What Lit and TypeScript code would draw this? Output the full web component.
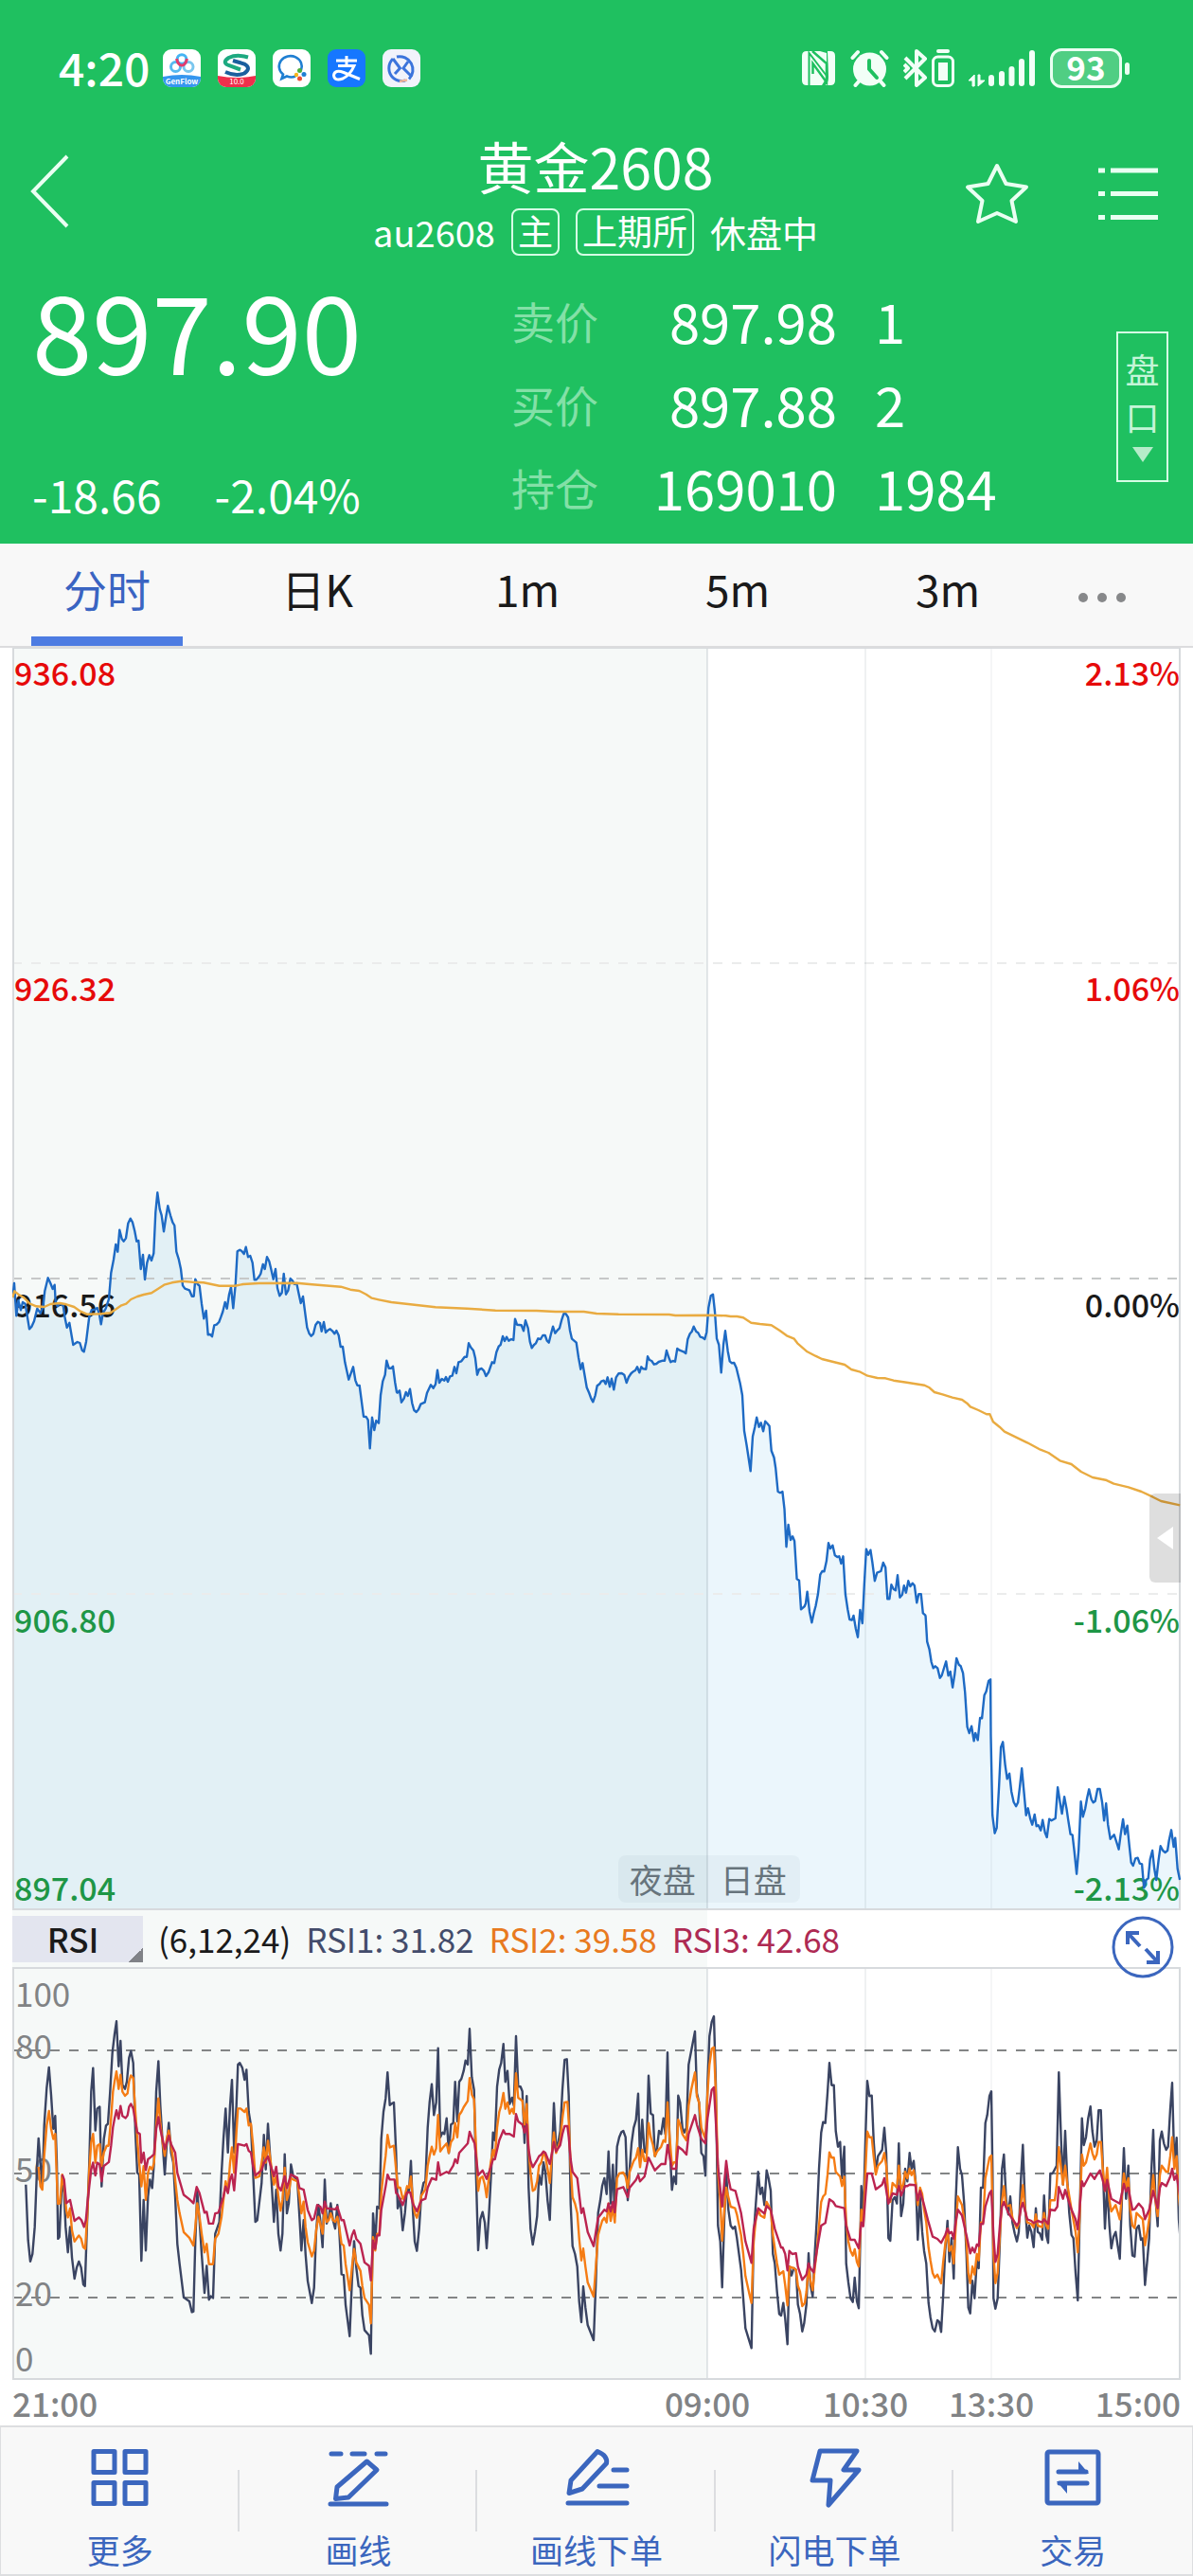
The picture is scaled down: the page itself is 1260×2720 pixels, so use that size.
import { LitElement, html, svg, css } from "lit";
import { customElement, state } from "lit/decorators.js";

/** A stretch of samples: plot offset, sampling density and the "x,y" pairs. */
interface Run {
  at: [number, number];
  density: [number, number];
  samples: string;
}

const toPoints = (runs: Run[]): string =>
  runs
    .map(({ at, density, samples }) =>
      samples
        .trim()
        .split(/\s+/)
        .map((pair) => {
          const [x, y] = pair.split(",").map(Number);
          return `${(at[0] + x / density[0]).toFixed(1)},${(at[1] + y / density[1]).toFixed(1)}`;
        })
        .join(" ")
    )
    .join(" ");

/* ---- price plot: 1234 x 1333 units ---- */

const PRICE = toPoints([
  {
    at: [-13, 536],
    density: [3, 3],
    samples: `40,450 45,405 52,508 58,460 66,490 72,465 80,470 93,550 100,543 108,525 118,485 128,500 136,480 142,430 152,388 160,405 167,423 173,410 176,465 182,478 188,470 200,475 205,510 212,545 220,530 232,600 245,591 253,594 260,617 266,622 273,590 283,510 290,490 300,488 308,483 315,505 320,535 326,500 335,485 345,455 352,372 360,330 367,282 373,305 379,236 386,265 392,272 399,262 406,215 413,200 420,212 427,240 433,272 439,270 446,360 453,315 459,393 466,340 473,316 480,333 487,310 493,180 499,118 506,170 512,190 519,241 526,195 532,160 540,190 547,212 553,222 559,305 566,328 573,360 579,412 586,422 600,427 608,446 614,446 619,392 626,408 632,413 639,470 646,517 653,492 659,568 666,567 672,574 679,538 686,536 694,528 700,512 706,495 713,465 719,485 726,440 732,417 739,484 746,410 752,304 760,299 766,303 773,312 779,290 786,322 793,318 800,340 806,394 812,394 820,385 826,375 833,345 839,360 846,322 853,335 859,360 866,392 873,360 879,420 886,445 893,435 899,375 906,440 913,428 920,390 927,397 933,408 940,405 947,440 953,468 960,447 967,500 973,545 980,565 986,572 993,565 1000,537 1007,527 1014,531 1019,557 1026,528 1032,561 1040,553 1046,550 1053,556 1060,565 1066,555 1073,570 1079,606 1086,606 1093,655 1105,710 1119,670 1126,712 1132,728 1139,729 1152,827 1160,828 1166,838 1172,928 1179,830 1186,870 1192,840 1200,848 1206,760 1213,715 1220,695 1225,650 1232,674 1240,674 1245,668 1252,720 1257,750`,
  },
  {
    at: [367, 616],
    density: [3, 3],
    samples: `119,512 126,505 132,542 140,530 146,510 152,522 159,500 166,545 172,567 179,573 186,565 193,548 206,542 213,512 225,487 233,497 240,485 246,440 252,480 260,468 268,473 273,462 279,477 286,460 293,458 300,430 306,450 313,415 322,412 332,398 339,398 345,355 352,368 360,378 366,403 372,455 378,438 386,435 393,442 400,459 408,447 419,415 426,418 433,383 440,365 446,360 453,333 459,348 465,335 472,347 480,342 487,345 492,278 498,296 512,298 519,316 525,283 533,307 539,350 545,370 552,360 558,355 565,340 573,342 580,330 587,330 593,347 599,353 606,325 612,302 619,323 627,313 633,307 640,280 646,262 653,262 660,273 666,315 672,341 686,353 693,400 700,437 706,418 713,460 719,495 727,513 733,530 739,541 746,520 752,490 760,484 765,476 773,473 779,484 785,463 792,493 798,467 805,502 812,463 820,451 830,450 838,455 845,480 852,462 860,450 866,445 873,441 879,430 886,448 892,430 898,436 907,437 912,397 918,408 925,411 932,422 940,420 947,414 960,410 966,410 972,378 979,400 985,415 992,411 999,413 1006,372 1013,377 1026,382 1033,387 1039,343 1046,325 1052,318 1058,302 1066,318 1072,322 1079,335 1086,337 1093,342 1099,320 1105,242 1112,205 1119,200 1125,255 1131,340 1138,360 1145,448 1152,360 1158,316 1166,380 1172,412 1179,418 1186,417 1193,433 1205,482 1212,520 1218,632 1226,680 1238,760 1245,650 1252,620`,
  },
  {
    at: [707, 656],
    density: [2.904, 3],
    samples: `230,470 237,500 243,487 250,514 256,482 263,490 269,497 275,575 283,597 288,630 295,705 302,709 309,705 315,760 321,880 327,810 334,858 340,847 346,862 353,982 360,986 366,1078 377,1068 380,1060 385,1022 392,1085 399,1120 405,1090 411,1067 418,1030 425,968 431,957 437,958 444,925 450,868 456,885 463,875 470,907 477,912 483,910 489,933 495,910 502,1030 509,1078 515,1110 522,1112 527,1098 534,1140 540,1166 547,1080 554,1122 560,1000 566,887 572,905 579,890 585,930 592,988 599,962 611,957 618,930 625,945 631,1045 637,1045 643,1000 650,1014 656,1018 662,970 669,1040 676,1032 682,1003 688,1025 695,988 701,1005 708,995 714,1003 721,1057 727,1030 734,1030 740,1090 747,1096`,
  },
  {
    at: [607, 1016],
    density: [2.45, 3],
    samples: `876,20 880,100 886,125 891,165 896,184 901,178 907,184 913,215 918,207 924,183 929,163 935,208 940,195 946,245 951,205 956,153 962,173 967,178 973,200 978,260 984,370 989,390 995,368 1001,415 1005,390 1011,412 1017,342 1022,343 1028,270 1033,258 1039,225 1044,220 1045,400 1049,650 1055,707 1060,690 1066,560 1071,435 1076,418 1082,490 1087,535 1093,518 1098,575 1104,608 1110,622 1115,610 1120,560 1125,502 1131,580 1136,650 1141,628 1147,662 1152,680 1158,648 1163,685 1168,682 1174,698 1179,665 1185,705 1190,720 1196,662 1202,667 1212,660 1218,562 1224,610 1229,645 1235,592 1241,630 1245,665 1251,710 1256,713 1261,765 1267,836 1272,760 1278,607 1283,655 1289,630 1294,595 1299,568 1305,600 1310,610 1315,605 1321,567 1327,567 1333,610 1338,667 1343,613 1348,680 1354,725 1364,712 1370,735 1376,758 1381,710 1387,663 1392,710 1398,683 1403,745 1408,800 1413,810 1419,787 1425,785 1430,803 1436,805 1441,880 1447,855 1452,850 1457,790 1463,762 1468,820 1473,855 1479,790 1484,748 1490,762 1496,768 1502,762 1506,730 1512,697 1518,750 1522,722 1528,820 1534,855`,
  },
]);

const AVERAGE = toPoints([
  {
    at: [-13, 536],
    density: [3, 3],
    samples: `40,450 46,430 58,440 75,450 95,470 115,478 140,480 160,471 190,468 210,472 235,480 255,494 275,503 320,502 350,499 370,485 385,475 400,470 415,456 435,447 455,441 480,436 500,423 520,410 545,403 575,398 610,401 645,403 670,408 695,413 745,413 770,408 820,405 940,404 980,408 1025,412 1080,416 1110,425 1138,429`,
  },
  {
    at: [367, 616],
    density: [3, 3],
    samples: `0,190 20,200 38,212 60,217 100,225 180,234 240,241 340,245 430,251 560,252 620,255 710,255 750,261 820,263 980,264 1000,267 1110,266 1160,268 1175,270 1195,270 1215,274 1240,290`,
  },
  {
    at: [707, 656],
    density: [2.904, 3],
    samples: `240,174 275,178 300,194 322,211 345,221 355,235 385,262 410,275 430,285 465,294 500,303 520,318 545,325 570,338 600,345 625,346 650,353 690,359 745,368 760,376 775,390 800,397 830,407 860,414 875,425 885,436 910,447 935,460 945,460 955,484 975,500 990,515 1030,535 1060,550 1100,572 1125,582 1160,607 1195,618 1225,642 1260,660 1300,668 1325,680 1370,691 1410,705 1445,722 1470,735 1528,748`,
  },
]);

/* ---- RSI plot: 1234 x 436 units ---- */

const rsiLine = (a: string, b: string, c: string) =>
  toPoints([
    { at: [-13, -97], density: [3, 2.8], samples: a },
    { at: [387, -17], density: [3, 3], samples: b },
    { at: [787, -17], density: [3, 3], samples: c },
  ]);

const RSI1 = rsiLine(
  `82,915 89,1080 96,1142 103,1120 110,1040 118,850 122,778 128,850 134,925 140,740 148,630 155,568 162,650 169,750 175,712 180,850 184,1075 188,1070 197,890 203,940 208,1040 215,1115 222,1040 228,1130 236,1193 243,1160 250,1142 257,1160 264,1210 269,1215 275,1050 283,850 289,640 295,570 302,755 308,690 316,685 322,920 329,780 336,740 342,735 349,640 356,525 363,470 369,432 376,565 382,490 388,620 396,632 402,610 409,540 415,520 422,555 429,760 435,880 441,885 448,1140 455,960 462,1110 469,950 475,900 482,925 488,850 495,640 502,550 508,680 515,790 522,885 528,800 535,732 542,820 549,850 555,950 562,1090 569,1150 582,1248 600,1260 608,1292 613,1290 619,1080 625,935 632,1020 639,1120 648,1235 655,1155 662,1255 668,1245 675,1250 682,1060 695,1025 702,880 708,780 715,690 722,820 729,680 735,605 742,820 749,680 754,560 760,555 768,570 775,605 781,575 788,700 795,740 802,880 809,1025 815,1020 829,910 836,768 842,870 849,735 855,820 868,1025 875,930 882,1060 889,1110 895,1060 902,825 909,1000 915,970 922,855 929,890 942,900 949,1010 955,1110 962,1020 968,1120 975,1200 988,1265 995,1220 1002,1050 1009,975 1015,1020 1022,1100 1029,900 1035,1030 1042,1010 1048,970 1055,1020 1062,1045 1069,975 1075,1050 1082,1180 1089,1182 1095,1270 1102,1320 1108,1363 1115,1200 1122,1082 1129,1160 1136,1215 1142,1220 1148,1300 1155,1345 1169,1360 1175,1415 1182,1000 1189,1090 1195,980 1202,985 1208,780 1215,700 1222,660 1228,583 1235,680 1242,675 1248,672 1255,820 1260,985`,
  `62,810 68,785 76,885 83,830 90,750 96,760 102,665 108,820 114,920 121,950 128,880 135,770 142,735 148,730 155,560 161,480 168,422 175,520 182,480 188,308 195,590 202,575 208,580 215,530 222,640 229,550 236,545 242,415 249,540 255,415 262,405 269,380 275,347 282,360 288,247 295,400 302,440 308,700 315,948 322,850 329,827 336,860 342,942 349,840 355,730 362,575 368,600 375,430 382,375 388,355 395,295 401,415 408,380 415,485 422,465 428,490 435,270 442,430 449,430 455,445 462,608 469,460 475,750 481,880 488,930 495,890 502,840 508,710 515,740 522,670 528,700 535,790 542,852 549,650 555,482 562,620 569,605 575,570 582,440 589,345 596,343 602,460 608,800 614,935 622,960 629,1000 635,1110 642,1176 648,1063 655,1130 662,1185 681,1233 688,1050 695,830 702,790 708,745 715,720 722,770 728,635 735,800 742,677 748,840 755,620 762,590 769,574 775,570 782,590 789,790 795,690 801,610 808,560 815,535 822,452 828,665 835,535 842,635 848,640 855,395 862,515 869,520 875,650 882,625 888,570 895,580 902,530 908,580 915,322 922,620 929,757 935,715 942,738 949,458 955,480 962,560 968,575 975,560 982,360 1002,255 1008,450 1015,480 1022,640 1029,650 1035,712 1042,420 1048,270 1055,225 1062,207 1068,420 1075,870 1082,920 1088,1066 1095,850 1101,700 1108,820 1115,870 1122,880 1129,873 1135,910 1148,1010 1155,1100 1162,1195 1181,1258 1188,900 1195,800 1202,700 1209,770 1215,750 1222,805 1229,695 1235,720 1242,760 1249,960 1255,990 1262,1080 1269,1150 1275,1155 1282,1115`,
  `88,1165 95,1246 101,1000 108,1028 115,1005 122,1010 128,1120 135,1150 142,1205 148,1180 155,1120 162,958 168,1060 175,1095 182,950 188,850 195,690 202,575 208,542 215,545 222,450 228,355 235,425 242,425 248,570 255,620 262,605 268,720 275,620 281,990 288,1050 295,1100 302,1112 308,1035 315,1110 321,1132 325,950 329,745 335,850 342,600 348,412 355,460 362,458 368,600 375,700 382,650 395,630 402,560 408,640 415,910 421,918 428,790 435,780 442,800 448,610 455,840 462,800 468,690 475,730 482,640 488,690 495,665 502,740 508,915 515,780 522,890 528,950 535,990 542,1115 548,1160 555,1195 562,1205 570,1170 576,1175 582,1207 588,1100 595,950 602,855 608,985 615,910 622,1038 628,800 635,622 642,690 648,710 655,800 662,960 668,1130 674,1148 681,1045 688,1100 695,980 701,1005 708,750 715,750 722,545 728,520 735,460 741,445 745,700 748,1100 754,1133 761,1100 768,920 775,690 781,645 788,790 795,835 801,778 808,860 815,895 822,920 828,890 835,720 841,614 848,810 855,908 861,870 868,890 875,938 882,815 888,890 895,895 902,915 908,775 915,900 921,925 928,705 935,705 948,680 955,385 962,600 968,740 975,570 982,730 988,830 995,900 1001,910 1008,1020 1015,1107 1021,850 1028,530 1034,615 1041,590 1048,530 1055,493 1061,570 1068,620 1075,600 1081,505 1088,505 1095,700 1101,880 1108,740 1115,870 1121,942 1128,905 1135,890 1141,930 1148,975 1155,780 1161,625 1168,785 1175,680 1181,870 1188,965 1195,968 1201,880 1208,870 1215,915 1221,910 1228,1058 1235,980 1241,910 1248,700 1254,567 1261,780 1268,872 1275,600 1281,572 1288,610 1295,630 1301,620 1308,500 1314,418 1321,680 1328,592 1335,850 1342,940`
);

const RSI2 = rsiLine(
  `122,862 128,920 134,930 140,830 148,740 155,697 162,750 169,780 175,765 180,900 184,972 190,970 197,885 203,920 210,990 215,1012 222,985 228,1050 236,1083 250,1065 257,1075 264,1100 270,1105 277,1000 283,870 289,790 295,765 302,850 308,800 316,795 322,860 329,820 338,800 344,800 352,720 358,640 363,610 369,580 376,632 382,590 388,640 396,652 404,645 409,610 415,592 422,600 429,700 435,780 441,850 448,920 455,860 462,960 469,880 475,862 482,870 488,850 495,740 502,660 508,730 515,790 522,830 528,780 535,755 542,800 549,840 555,900 562,960 569,1000 582,1055 600,1072 613,1095 619,1040 625,970 632,1010 639,1060 648,1115 655,1090 662,1150 675,1150 682,1075 692,1060 702,1010 708,960 715,905 722,935 729,850 735,805 742,880 749,760 754,690 762,690 775,700 781,690 788,740 795,735 802,800 809,895 822,890 829,850 836,805 842,850 849,785 855,830 868,915 875,890 882,950 889,992 895,960 902,865 909,960 915,940 922,895 929,900 942,905 949,950 955,1000 962,965 968,1040 975,1085 988,1127 995,1110 1002,1050 1009,1010 1015,1030 1022,1060 1029,985 1035,1025 1042,1020 1048,1000 1055,1020 1062,1025 1069,1010 1075,1040 1082,1090 1089,1095 1095,1150 1108,1227 1115,1160 1122,1105 1129,1145 1142,1170 1148,1215 1155,1250 1169,1270 1175,1325 1182,1070 1189,1110 1195,1060 1202,1060 1208,940 1215,880 1222,830 1228,768 1235,805 1248,800 1255,870 1260,918`,
  `62,750 68,750 76,785 83,775 90,745 96,750 102,715 108,790 114,830 121,845 128,820 135,775 148,755 155,680 161,650 168,620 175,645 182,625 188,520 195,635 202,625 215,610 222,640 229,605 236,595 242,545 249,590 255,520 262,510 269,495 282,475 288,403 295,455 302,470 308,620 315,760 322,720 329,715 336,740 342,780 349,720 355,670 362,630 368,655 375,560 382,510 388,490 395,450 401,500 408,480 415,515 422,500 428,515 435,388 442,465 455,475 462,550 469,485 475,630 481,700 488,760 495,755 502,730 508,680 515,670 522,640 528,650 535,690 542,735 549,640 555,575 562,640 569,620 575,600 582,530 589,480 598,478 602,540 608,680 614,780 622,800 629,830 635,910 642,980 648,943 655,1000 662,1050 681,1095 688,1000 695,900 702,875 708,855 715,845 722,860 728,800 735,855 742,810 748,860 755,720 762,705 775,702 782,715 789,750 795,700 808,665 815,655 822,625 828,685 835,630 842,665 848,665 855,545 862,590 869,615 875,650 882,635 895,620 902,600 908,605 915,480 922,590 929,680 935,670 942,670 949,535 955,550 962,580 975,600 982,490 990,440 1002,385 1008,460 1015,480 1022,560 1029,580 1035,595 1042,450 1048,360 1055,310 1062,305 1068,450 1075,700 1082,790 1088,918 1095,820 1101,750 1108,780 1115,810 1129,815 1135,835 1148,900 1155,960 1162,1030 1175,1090 1181,1115 1188,920 1195,850 1202,820 1209,838 1222,845 1229,795 1242,820 1249,900 1262,990 1269,1025 1282,1015`,
  `88,1060 95,1123 101,1000 115,1005 122,1010 128,1060 135,1080 142,1125 150,1115 155,1080 162,1000 168,1045 175,1075 182,1000 188,950 195,870 202,795 208,778 215,770 222,710 228,638 235,655 242,655 248,700 262,715 268,745 275,715 281,860 288,920 295,950 302,965 308,945 315,985 321,1000 329,820 335,870 342,700 348,572 355,590 362,590 368,650 375,708 382,680 395,665 402,640 408,680 415,780 421,795 428,735 442,750 448,680 455,755 462,740 468,700 475,720 482,690 488,710 495,695 502,740 508,805 515,750 522,770 528,820 535,860 542,940 548,980 555,1020 562,1035 570,1025 582,1053 588,990 595,930 602,880 608,950 615,935 622,990 628,880 635,778 648,805 655,850 662,920 668,1020 674,1052 681,1000 688,1025 695,960 701,980 708,860 715,860 722,720 728,690 735,655 741,648 748,960 754,1052 761,1020 768,900 775,790 781,745 788,810 801,805 808,845 822,878 828,865 835,800 841,742 848,820 855,860 868,865 875,875 882,835 888,870 902,875 908,830 915,870 921,880 928,790 942,790 948,740 955,622 962,690 968,740 975,680 982,740 995,820 1008,890 1015,955 1021,840 1028,645 1034,680 1041,670 1055,610 1061,640 1068,660 1075,645 1081,605 1088,605 1095,700 1101,760 1108,687 1115,790 1121,825 1135,805 1148,850 1155,770 1161,705 1168,750 1175,720 1181,820 1188,870 1195,878 1201,830 1221,850 1228,932 1235,890 1241,850 1248,770 1254,710 1261,790 1268,840 1275,710 1281,680 1295,700 1301,700 1308,650 1314,590 1321,690 1328,650 1335,780 1342,840`
);

const RSI3 = rsiLine(
  `197,885 203,900 210,970 222,960 236,1022 250,1012 258,1020 266,1040 272,1020 278,960 289,870 295,850 302,888 308,850 316,855 322,905 329,860 345,848 352,800 358,745 363,720 369,695 376,720 382,682 388,712 398,718 404,710 409,685 415,676 422,690 429,730 435,760 443,765 448,850 455,820 462,872 469,840 480,832 488,825 495,750 502,715 508,750 522,810 535,770 542,795 555,820 562,880 582,945 600,958 613,970 623,922 632,940 648,998 655,995 662,1030 675,1030 682,1000 692,998 708,950 715,920 722,940 729,900 735,885 742,932 749,850 754,795 775,800 781,795 788,815 795,820 802,860 809,888 829,872 836,850 849,832 855,850 868,890 875,862 882,920 890,932 902,890 909,925 922,885 942,895 949,925 962,930 975,990 988,1020 995,1015 1005,975 1015,980 1022,1000 1029,965 1035,985 1062,988 1069,980 1082,1020 1089,1020 1108,1095 1115,1065 1122,1050 1129,1075 1142,1090 1155,1145 1169,1155 1175,1198 1182,1080 1189,1105 1195,1065 1202,1065 1208,990 1222,920 1228,885 1235,900 1250,900 1255,940`,
  `60,770 76,805 90,765 100,765 108,800 121,825 135,790 148,785 155,750 168,720 182,725 188,670 195,710 215,700 222,703 236,680 242,660 249,672 255,640 282,610 288,573 295,590 304,610 315,710 329,695 342,722 355,685 362,660 368,660 382,600 395,568 401,580 415,580 428,588 435,517 442,540 455,550 462,575 469,550 475,630 481,665 488,685 500,665 508,650 515,645 522,635 528,640 542,675 549,640 555,605 562,635 575,615 582,580 589,555 598,555 602,590 608,660 614,700 629,720 642,830 648,815 662,890 681,935 688,890 695,845 715,820 722,825 728,800 735,825 742,795 748,828 755,755 775,748 789,780 795,750 815,725 822,710 828,730 842,715 855,655 875,695 895,675 908,675 915,615 929,690 942,690 949,620 962,630 975,645 982,580 1002,520 1008,550 1022,595 1035,610 1042,530 1055,440 1062,432 1068,540 1075,680 1088,810 1101,665 1108,720 1115,755 1130,760 1148,830 1162,920 1181,988 1188,880 1202,815 1222,832 1229,808 1242,820 1255,880 1275,940`,
  `80,940 88,960 95,1012 101,950 110,960 122,958 128,1000 142,1042 155,1025 162,990 168,1005 178,1018 188,950 202,870 215,862 228,787 240,795 248,808 275,815 281,870 295,915 308,915 321,942 329,860 335,872 342,780 348,705 362,705 375,755 395,740 402,720 415,800 428,768 442,772 448,745 455,775 468,745 475,745 482,740 500,742 508,790 515,760 528,805 542,860 555,905 570,912 582,925 595,900 602,880 608,895 615,890 622,912 628,860 635,820 648,838 662,900 674,958 681,940 688,955 695,930 701,935 708,865 715,865 722,810 735,768 741,760 748,900 754,985 761,960 768,870 775,810 781,795 795,830 808,850 822,870 828,860 835,815 841,798 855,850 868,855 875,862 888,855 902,860 908,850 921,865 928,820 942,822 950,810 955,748 968,785 975,757 995,820 1008,850 1015,882 1028,730 1034,745 1055,705 1068,722 1075,710 1085,695 1095,730 1101,760 1108,725 1121,785 1148,800 1161,738 1168,762 1175,750 1188,820 1195,818 1208,800 1221,815 1228,850 1241,820 1254,760 1268,815 1275,750 1281,735 1295,745 1308,715 1314,690 1321,725 1328,710 1342,798`
);

const TABS = ["分时", "日K", "1m", "5m", "3m"];

const QUOTES = [
  { label: "卖价", value: "897.98", extra: "1" },
  { label: "买价", value: "897.88", extra: "2" },
  { label: "持仓", value: "169010", extra: "1984" },
];

const LEVELS = [
  { price: "936.08", change: "2.13%", tone: "up" },
  { price: "926.32", change: "1.06%", tone: "up" },
  { price: "916.56", change: "0.00%", tone: "flat" },
  { price: "906.80", change: "-1.06%", tone: "down" },
];

const ACTIONS = [
  {
    label: "更多",
    icon: svg`<rect x="4" y="4.500" width="22" height="22"/><rect x="37" y="4.500" width="22" height="22"/><rect x="4" y="37.500" width="22" height="22"/><rect x="37" y="37.500" width="22" height="22"/>`,
  },
  {
    label: "画线",
    icon: svg`<path d="M4 7H14M26 7H39M52 7H61M3 60H62"/><path d="M41.500 15 52 24 22 53 8.500 54.500 10 42Z"/>`,
  },
  {
    label: "画线下单",
    icon: svg`<path d="M50 24H64M35 41H64M2 59H64"/><path d="M33 4.500Q44 9 42.500 17L17 44 3 48.500 5 35Z"/>`,
  },
  {
    label: "闪电下单",
    icon: svg`<path d="M16 4H55L41 24H57L25 61 27 35H8Z"/>`,
  },
  {
    label: "交易",
    icon: svg`<rect x="5" y="5" width="54" height="54" rx="2"/><path d="M17 26H46M18 38H47"/><path d="M38 15 49 28H38ZM26 49 15 36H26Z" fill="currentColor" stroke="none"/>`,
  },
];

@customElement("app-root")
export class AppRoot extends LitElement {
  @state() private tab = 0;

  static styles = css`
    :host {
      display: block;
      background: #fff;
      color: #1a1a1a;
      font-family: "Noto Sans CJK SC", "Noto Sans", sans-serif;
    }
    * {
      box-sizing: border-box;
    }
    button,
    select {
      margin: 0;
      padding: 0;
      border: 0;
      border-radius: 0;
      background: none;
      color: inherit;
      font: inherit;
      appearance: none;
      cursor: pointer;
    }
    svg {
      display: block;
      flex: none;
    }

    /* header */
    .header {
      background: #1fc060;
      color: #fff;
    }
    .status {
      display: flex;
      justify-content: space-between;
      align-items: center;
      padding: 48px 67px 42px 62px;
    }
    .status-side {
      display: flex;
      align-items: center;
      height: 48px;
    }
    .clock {
      margin-right: 14px;
      font-size: 48px;
      font-weight: 500;
      line-height: 44px;
      height: 48px;
    }
    .apps {
      display: flex;
      gap: 18px;
    }
    .signals {
      gap: 15px;
    }
    .pair {
      display: flex;
      gap: 4px;
    }
    .battery {
      display: flex;
      align-items: center;
      gap: 3px;
    }
    .battery-body {
      width: 76px;
      height: 42px;
      border: 3px solid #eafff2;
      border-radius: 12px;
      background: rgba(255, 255, 255, 0.22);
      font-size: 35px;
      font-weight: 700;
      line-height: 32px;
      text-align: center;
    }
    .battery-tip {
      width: 5px;
      height: 13px;
      border-radius: 3px;
      background: #eafff2;
    }
    .nav {
      display: grid;
      grid-template-columns: 1fr auto 1fr;
      align-items: center;
      padding: 0 34px 0 32px;
    }
    .nav-actions {
      display: flex;
      justify-content: flex-end;
      gap: 72px;
    }
    .heading {
      display: flex;
      flex-direction: column;
      align-items: center;
      gap: 8px;
    }
    .title {
      margin: 0;
      font-size: 59px;
      font-weight: 400;
      line-height: 74px;
    }
    .subtitle {
      display: flex;
      align-items: center;
      gap: 17px;
      font-size: 38px;
      line-height: 48px;
    }
    .tag {
      height: 50px;
      padding: 0 5px;
      border: 2px solid #d5ffe5;
      border-radius: 8px;
      font-size: 37px;
      line-height: 43px;
    }
    .quote {
      display: grid;
      grid-template-columns: 506fr 639fr 55px;
      align-items: center;
      padding: 24px 26px 16px 34px;
    }
    .last {
      display: flex;
      flex-direction: column;
      justify-content: space-between;
      align-self: stretch;
    }
    .price {
      font-size: 114px;
      line-height: 106px;
    }
    .change {
      display: flex;
      gap: 56px;
      font-size: 48px;
      line-height: 74px;
    }
    .book {
      justify-self: start;
      border-collapse: collapse;
      font-size: 58px;
      line-height: 88px;
    }
    .book th,
    .book td {
      padding: 0;
      font-weight: 400;
      text-align: left;
    }
    .book th {
      color: #83e0a7;
      font-size: 46px;
    }
    .book .amount {
      width: 252px;
      text-align: right;
    }
    .book .extra {
      padding-left: 40px;
    }
    .depth {
      display: flex;
      flex-direction: column;
      align-items: center;
      margin-top: 6px;
      padding: 12px 0 19px;
      border: 2px solid #d5ffe5;
      color: #c4f5d7;
      font-size: 36px;
      line-height: 50px;
    }
    .depth svg {
      margin-top: 8px;
    }

    /* period tabs */
    .tabs {
      display: grid;
      grid-template-columns: repeat(5, 222fr) 104fr;
      padding: 0 44px 0 2px;
      border-bottom: 2px solid #dcdcde;
      background: #f8f8f8;
    }
    .tab {
      display: flex;
      flex-direction: column;
      align-items: center;
      justify-content: space-between;
      height: 108px;
      font-size: 46px;
      line-height: 94px;
    }
    .tab::after {
      content: "";
      width: 160px;
      height: 10px;
    }
    .tab.active {
      color: #3a64c2;
    }
    .tab.active::after {
      background: #4d7ce2;
    }
    .dots {
      display: flex;
      align-items: center;
      justify-content: center;
      gap: 10px;
      padding-top: 6px;
    }
    .dot {
      width: 10px;
      height: 10px;
      border-radius: 50%;
      background: #87888a;
    }

    /* charts */
    .charts {
      margin: 0 13px;
      background: linear-gradient(to right, #f6f9f8 59.46%, #fff 59.46%);
    }
    .plot {
      position: relative;
    }
    .plot-price {
      aspect-ratio: 1234 / 1333;
    }
    .plot-rsi {
      aspect-ratio: 1234 / 436;
    }
    .layer {
      position: absolute;
      inset: 0;
      width: 100%;
      height: 100%;
    }
    .layer * {
      vector-effect: non-scaling-stroke;
    }
    .frame {
      fill: none;
      stroke: #d7dadd;
      stroke-width: 2;
    }
    .area {
      fill: rgba(0, 140, 220, 0.08);
    }
    .session {
      stroke: rgba(110, 125, 140, 0.18);
      stroke-width: 2;
    }
    .session.faint {
      stroke: rgba(110, 125, 140, 0.11);
    }
    .session.fainter {
      stroke: rgba(110, 125, 140, 0.07);
    }
    .dash {
      stroke: #ebecec;
      stroke-width: 2;
      stroke-dasharray: 10 10;
    }
    .dash.base {
      stroke: #c6c8c8;
    }
    .dash.level {
      stroke: #838586;
    }
    .line {
      fill: none;
      stroke-width: 2.4;
      stroke-linejoin: round;
    }
    .line.quote-line {
      stroke: #1e6ac4;
    }
    .line.average {
      stroke: #e9ab41;
    }
    .line.rsi1 {
      stroke: #3a4462;
    }
    .line.rsi2 {
      stroke: #f57c14;
    }
    .line.rsi3 {
      stroke: #bb2450;
    }
    .levels {
      display: grid;
      grid-template-rows: repeat(4, 1fr);
      padding: 0 1px 0 2px;
      font-size: 34px;
      font-weight: 500;
      line-height: 52px;
    }
    .level-row {
      display: flex;
      flex-direction: column;
      justify-content: space-between;
    }
    .level {
      display: flex;
      justify-content: space-between;
    }
    .level.bottom {
      line-height: 48px;
    }
    .up {
      color: #e60a0a;
    }
    .down {
      color: #1e9646;
    }
    .chips {
      display: grid;
      grid-template-columns: 5946fr 4054fr;
      align-items: end;
      padding-bottom: 8px;
      color: #67747c;
      font-size: 35px;
      line-height: 50px;
    }
    .chip {
      justify-self: start;
      padding: 0 14px;
      border-radius: 0 8px 8px 0;
      background: rgba(90, 120, 140, 0.06);
    }
    .chip.night {
      justify-self: end;
      padding: 0 12px;
      border-radius: 8px 0 0 8px;
    }
    .drawer {
      position: absolute;
      right: 0;
      top: 67%;
      display: flex;
      align-items: center;
      justify-content: center;
      width: 33px;
      height: 94px;
      border-radius: 6px 0 0 6px;
      background: rgba(0, 0, 0, 0.13);
    }
    .rsi-bar {
      position: relative;
      display: flex;
      align-items: center;
      gap: 16px;
      height: 60px;
      font-size: 35px;
      line-height: 48px;
    }
    .picker {
      width: 138px;
      height: 49px;
      padding-right: 10px;
      background: linear-gradient(135deg, transparent 50%, #808287 50%) right bottom / 15px 15px
        no-repeat #e3e5ef;
      font-weight: 500;
      text-align: center;
      text-align-last: center;
    }
    .v1 {
      color: #434c6b;
    }
    .v2 {
      color: #e87a1f;
    }
    .v3 {
      color: #ae2a53;
    }
    .expand {
      position: absolute;
      right: 7px;
      top: 6px;
      z-index: 1;
      color: #3b66be;
    }
    .scale {
      position: absolute;
      left: 3px;
      color: #818385;
      font-size: 35px;
      line-height: 48px;
      transform: translateY(-50%);
    }
    .axis {
      display: grid;
      grid-template-columns: 634fr 200fr 134fr 132fr 134fr;
      margin: 0 13px;
      color: #818385;
      font-size: 35px;
      font-weight: 500;
      line-height: 48px;
      text-align: center;
    }
    .axis-start {
      text-align: left;
    }
    .axis-end {
      text-align: right;
    }

    /* bottom actions */
    .actions {
      display: grid;
      grid-template-columns: repeat(5, 1fr);
      border: 2px solid #dddee0;
      border-width: 2px 1px;
      background: #f8f8f8;
      color: #3b66be;
      font-size: 35px;
      line-height: 46px;
    }
    .action {
      position: relative;
      display: flex;
      flex-direction: column;
      align-items: center;
      gap: 21px;
      padding: 21px 0 3px;
    }
    .action + .action::before {
      content: "";
      position: absolute;
      left: -2px;
      top: 45px;
      width: 2px;
      height: 65px;
      background: #dcdde0;
    }
  `;

  private renderStatus() {
    return html`
      <div class="status">
        <div class="status-side">
          <span class="clock">4:20</span>
          <div class="apps">
            <svg width="40" height="40" viewBox="0 0 40 40">
              <defs>
                <clipPath id="genflow"><rect width="40" height="40" rx="9" /></clipPath>
              </defs>
              <g clip-path="url(#genflow)">
                <rect width="40" height="40" fill="#fff" />
                <circle cx="13.500" cy="18.500" r="5" fill="none" stroke="#58b9f0" stroke-width="3" />
                <circle cx="27" cy="18.500" r="5" fill="none" stroke="#7ac6ee" stroke-width="3" />
                <circle cx="20" cy="10.500" r="4.800" fill="none" stroke="#45b4f3" stroke-width="3" />
                <path d="M14.500 10Q16 17 20 17T25.500 10" fill="none" stroke="#e43b6c" stroke-width="3" />
                <path d="M0 29Q20 25 40 29V40H0Z" fill="#3596ef" />
              </g>
              <text x="20" y="37" fill="#fff" font-size="8" font-weight="700" text-anchor="middle">GenFlow</text>
            </svg>
            <svg width="40" height="40" viewBox="0 0 40 40">
              <defs>
                <clipPath id="ssec"><rect width="40" height="40" rx="9" /></clipPath>
              </defs>
              <g clip-path="url(#ssec)">
                <rect width="40" height="40" fill="#fff" />
                <path d="M32 8.500Q20 5 11.500 9 4 14 11.500 17L24 21.500" fill="none" stroke="#1da980" stroke-width="4" />
                <path d="M8 24Q19 29 28 25.500 36 20 28 15.500L16 12" fill="none" stroke="#1a5f9e" stroke-width="4" />
                <path d="M0 28Q20 32 40 28V40H0Z" fill="#ef2f4c" />
              </g>
              <text x="20" y="37" fill="#fff" font-size="8" text-anchor="middle">10.0</text>
            </svg>
            <svg width="40" height="40" viewBox="0 0 40 40">
              <rect width="40" height="40" rx="9" fill="#fff" />
              <path d="M30 22A12 11 0 1 0 11 26.500L9.500 31 15 28.500Q20 30.500 24 28.500" fill="none" stroke="#1f7fd2" stroke-width="2.600" />
              <circle cx="28.500" cy="22.500" r="2.500" fill="#4caf3c" />
              <circle cx="33" cy="26.500" r="2.500" fill="#1f7fd2" />
              <circle cx="28.500" cy="31" r="2.500" fill="#ec4d33" />
              <circle cx="25" cy="27" r="2.200" fill="#f9b51b" />
            </svg>
            <svg width="40" height="40" viewBox="0 0 40 40">
              <rect width="40" height="40" rx="9" fill="#1677ff" />
              <path d="M9 12H31M20 7V17M11 17.500H28Q24 27 16 31 7 34 6.500 27.500 7.500 21 17 24.500L34 31.500" fill="none" stroke="#fff" stroke-width="3" />
            </svg>
            <svg width="40" height="40" viewBox="0 0 40 40">
              <rect width="40" height="40" rx="9" fill="#f1f3fb" />
              <path d="M15 8A14 14 0 0 1 28 31.500M24 33A14 14 0 0 1 10 29M11 30A14 14 0 0 1 11 10" fill="none" stroke="#3c74dc" stroke-width="3" />
              <path d="M11 10 18.500 20 13 26M27 13 22 20 31 29" fill="none" stroke="#3c74dc" stroke-width="3" />
              <path d="M18 34 26 32.500" stroke="#f4b69a" stroke-width="2.500" />
            </svg>
          </div>
        </div>
        <div class="status-side signals">
          <svg width="37" height="38" viewBox="0 0 37 38">
            <path d="M6 1H20L27 3V29L22 37H6Q1 37 1 32V6Q1 1 6 1ZM28 1H31Q36 1 36 6V32Q36 37 31 37H26Q29 34 29 28Z" fill="#f2fff7" />
            <path d="M8.500 37V3L27 27" fill="none" stroke="#1fc060" stroke-width="2" />
            <path d="M12.500 25V14L27 34V14L12 1" fill="none" stroke="#1fc060" stroke-width="2.500" />
          </svg>
          <svg width="41" height="40" viewBox="0 0 41 40">
            <circle cx="20.500" cy="21" r="17.500" fill="#f2fff7" />
            <path d="M2.500 9 8 3M38.500 9 33 3M9 34 5.500 38M32 34 35.500 38" stroke="#f2fff7" stroke-width="4" stroke-linecap="round" />
            <path d="M20 12V21L28 30" fill="none" stroke="#1fc060" stroke-width="4" stroke-linecap="round" stroke-linejoin="round" />
          </svg>
          <div class="pair">
            <svg width="26" height="40" viewBox="0 0 26 40">
              <path d="M2 9 23 30 14 38V2L23 10 2 31M1 16 5 20 1 24" fill="none" stroke="#f2fff7" stroke-width="4" stroke-linejoin="round" />
            </svg>
            <svg width="24" height="40" viewBox="0 0 24 40">
              <rect x="1.500" y="8" width="21" height="30.500" rx="5" fill="none" stroke="#f2fff7" stroke-width="3" />
              <rect x="7" y="14" width="10" height="19" fill="#f2fff7" />
              <path d="M7 2H17" stroke="#f2fff7" stroke-width="4" stroke-linecap="round" />
            </svg>
          </div>
          <svg width="71" height="40" viewBox="0 0 71 40">
            <path d="M24 30V36M35 26V36M45.500 21V36M56 13V36M67 4V36" stroke="#f2fff7" stroke-width="6" stroke-linecap="round" />
            <path d="M0 33 6 27V39H4V33ZM6 27V39M10 27V39L17 33H12V27Z" fill="#f2fff7" stroke="#f2fff7" stroke-width="1" />
          </svg>
          <div class="battery">
            <span class="battery-body">93</span>
            <span class="battery-tip"></span>
          </div>
        </div>
      </div>
    `;
  }

  private renderHeader() {
    return html`
      <header class="header">
        ${this.renderStatus()}
        <div class="nav">
          <div>
            <button aria-label="返回">
              <svg width="44" height="78" viewBox="0 0 44 78">
                <path d="M39 2 3 39 39 76" fill="none" stroke="#eafff2" stroke-width="4" />
              </svg>
            </button>
          </div>
          <div class="heading">
            <h1 class="title">黄金2608</h1>
            <div class="subtitle">
              <span>au2608</span>
              <span class="tag">主</span>
              <span class="tag">上期所</span>
              <span>休盘中</span>
            </div>
          </div>
          <div class="nav-actions">
            <button aria-label="自选">
              <svg width="70" height="66" viewBox="0 0 70 66">
                <path d="M35 4 44.500 23 66 26.500 50.500 41 55 63 35 54 15 63 19.500 41 4 26.500 25.500 23Z" fill="none" stroke="#eafff2" stroke-width="4" stroke-linejoin="round" />
              </svg>
            </button>
            <button aria-label="列表">
              <svg width="66" height="66" viewBox="0 0 66 66">
                <path d="M0 9H7M13 9H63M0 33.500H7M13 33.500H63M0 58.500H7M13 58.500H63" stroke="#eafff2" stroke-width="5" />
              </svg>
            </button>
          </div>
        </div>
        <section class="quote">
          <div class="last">
            <div class="price">897.90</div>
            <div class="change"><span>-18.66</span><span>-2.04%</span></div>
          </div>
          <table class="book">
            <tbody>
              ${QUOTES.map(
                (q) => html`<tr>
                  <th scope="row">${q.label}</th>
                  <td class="amount">${q.value}</td>
                  <td class="extra">${q.extra}</td>
                </tr>`
              )}
            </tbody>
          </table>
          <button class="depth">
            <span>盘</span><span>口</span>
            <svg width="22" height="16" viewBox="0 0 22 16"><path d="M0 0H22L11 16Z" fill="#b5ecc9" /></svg>
          </button>
        </section>
      </header>
    `;
  }

  private renderTabs() {
    return html`
      <nav class="tabs">
        ${TABS.map(
          (name, i) => html`<button class="tab ${i === this.tab ? "active" : ""}" @click=${() => (this.tab = i)}>
            ${name}
          </button>`
        )}
        <button class="dots" aria-label="更多周期">
          <span class="dot"></span><span class="dot"></span><span class="dot"></span>
        </button>
      </nav>
    `;
  }

  private renderPricePlot() {
    return html`
      <div class="plot plot-price">
        <svg class="layer" viewBox="0 0 1234 1333" preserveAspectRatio="none">
          <polygon class="area" points="0,1333 ${PRICE} 1234,1333" />
          <line class="dash" x1="0" x2="1234" y1="333" y2="333" />
          <line class="dash base" x1="0" x2="1234" y1="666" y2="666" />
          <line class="dash" x1="0" x2="1234" y1="999" y2="999" />
          <line class="session" x1="734" x2="734" y1="0" y2="1333" />
          <line class="session faint" x1="901" x2="901" y1="0" y2="1333" />
          <line class="session fainter" x1="1034" x2="1034" y1="0" y2="1333" />
          <rect class="frame" x="1" y="0" width="1232" height="1332" />
        </svg>
        <div class="layer levels">
          ${LEVELS.map(
            (l, i) => html`<div class="level-row">
              <div class="level ${l.tone}"><span>${l.price}</span><span>${l.change}</span></div>
              ${i === LEVELS.length - 1
                ? html`<div class="level bottom down"><span>897.04</span><span>-2.13%</span></div>`
                : ""}
            </div>`
          )}
        </div>
        <svg class="layer" viewBox="0 0 1234 1333" preserveAspectRatio="none">
          <polyline class="line quote-line" points=${PRICE} />
          <polyline class="line average" points=${AVERAGE} />
        </svg>
        <div class="layer chips">
          <span class="chip night">夜盘</span>
          <span class="chip">日盘</span>
        </div>
        <button class="drawer" aria-label="展开">
          <svg width="17" height="24" viewBox="0 0 17 24"><path d="M17 0V24L0 12Z" fill="#fff" /></svg>
        </button>
      </div>
    `;
  }

  private renderRsi() {
    const marks: [string, number][] = [
      ["100", 6.1],
      ["80", 18.8],
      ["50", 48.6],
      ["20", 78.6],
      ["0", 94.5],
    ];
    return html`
      <div class="rsi-bar">
        <select class="picker" aria-label="指标">
          <option>RSI</option>
        </select>
        <span>(6,12,24)</span>
        <span class="v1">RSI1: 31.82</span>
        <span class="v2">RSI2: 39.58</span>
        <span class="v3">RSI3: 42.68</span>
        <button class="expand" aria-label="全屏">
          <svg width="66" height="66" viewBox="0 0 66 66">
            <circle cx="33" cy="33" r="31" fill="none" stroke="currentColor" stroke-width="3" />
            <path d="M17 30V18H29M18 19 30 32M49 37V49H37M48 48 36 35" fill="none" stroke="currentColor" stroke-width="4" />
          </svg>
        </button>
      </div>
      <div class="plot plot-rsi">
        ${marks.map(([text, top]) => html`<span class="scale" style="top:${top}%">${text}</span>`)}
        <svg class="layer" viewBox="0 0 1234 436" preserveAspectRatio="none">
          <line class="dash level" x1="0" x2="1234" y1="88" y2="88" />
          <line class="dash level" x1="0" x2="1234" y1="218" y2="218" />
          <line class="dash level" x1="0" x2="1234" y1="349" y2="349" />
          <line class="session" x1="734" x2="734" y1="0" y2="436" />
          <line class="session faint" x1="901" x2="901" y1="0" y2="436" />
          <line class="session fainter" x1="1034" x2="1034" y1="0" y2="436" />
          <polyline class="line rsi1" points=${RSI1} />
          <polyline class="line rsi2" points=${RSI2} />
          <polyline class="line rsi3" points=${RSI3} />
          <rect class="frame" x="1" y="1" width="1232" height="434" />
        </svg>
      </div>
    `;
  }

  render() {
    return html`
      ${this.renderHeader()} ${this.renderTabs()}
      <main>
        <div class="charts">${this.renderPricePlot()} ${this.renderRsi()}</div>
        <div class="axis">
          <span class="axis-start">21:00</span>
          <span>09:00</span>
          <span>10:30</span>
          <span>13:30</span>
          <span class="axis-end">15:00</span>
        </div>
      </main>
      <footer class="actions">
        ${ACTIONS.map(
          (a) => html`<button class="action">
            <svg width="64" height="64" viewBox="0 0 64 64" overflow="visible" fill="none" stroke="currentColor" stroke-width="5" stroke-linejoin="round" stroke-linecap="round">
              ${a.icon}
            </svg>
            <span>${a.label}</span>
          </button>`
        )}
      </footer>
    `;
  }
}
